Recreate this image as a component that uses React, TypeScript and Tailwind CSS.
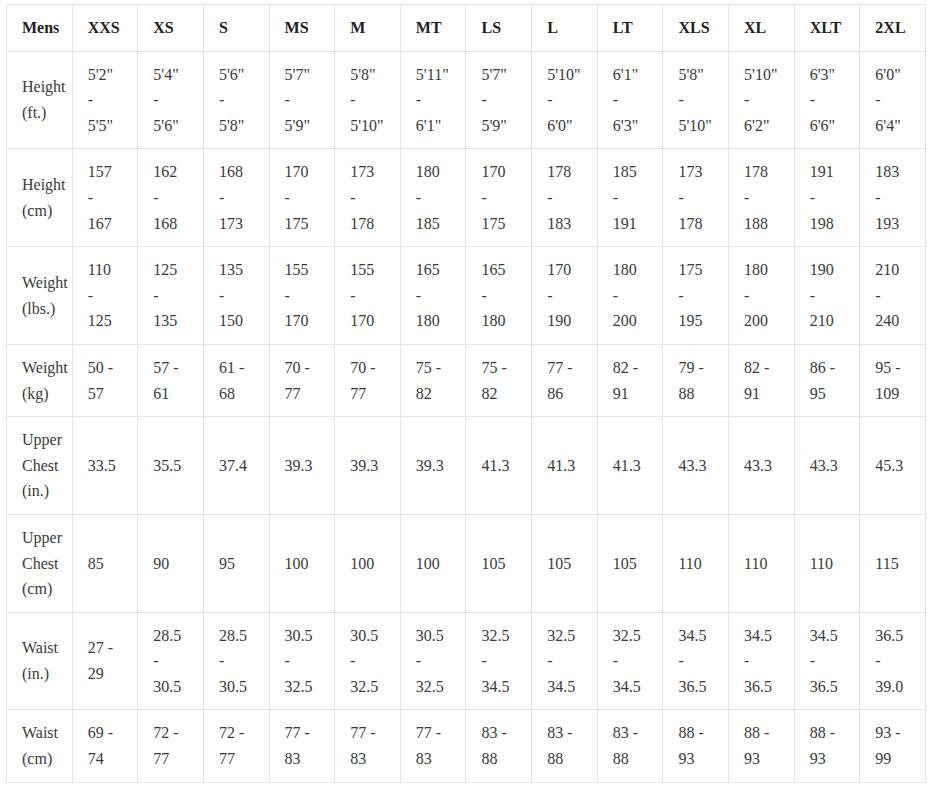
import React from 'react';

const sizes: string[] = ['XXS', 'XS', 'S', 'MS', 'M', 'MT', 'LS', 'L', 'LT', 'XLS', 'XL', 'XLT', '2XL'];

// tall = value on three lines ("a", "-", "b"), short = "a -" / "b"
const tall = (r: string): string => r.replace(' - ', '\n-\n');
const short = (r: string): string => r.replace(' - ', ' -\n');

type Row = { label: string; cells: string[] };

const rows: Row[] = [
  {
    label: 'Height\n(ft.)',
    cells: ['5\'2" - 5\'5"', '5\'4" - 5\'6"', '5\'6" - 5\'8"', '5\'7" - 5\'9"', '5\'8" - 5\'10"', '5\'11" - 6\'1"', '5\'7" - 5\'9"', '5\'10" - 6\'0"', '6\'1" - 6\'3"', '5\'8" - 5\'10"', '5\'10" - 6\'2"', '6\'3" - 6\'6"', '6\'0" - 6\'4"'].map(tall),
  },
  {
    label: 'Height\n(cm)',
    cells: ['157 - 167', '162 - 168', '168 - 173', '170 - 175', '173 - 178', '180 - 185', '170 - 175', '178 - 183', '185 - 191', '173 - 178', '178 - 188', '191 - 198', '183 - 193'].map(tall),
  },
  {
    label: 'Weight\n(lbs.)',
    cells: ['110 - 125', '125 - 135', '135 - 150', '155 - 170', '155 - 170', '165 - 180', '165 - 180', '170 - 190', '180 - 200', '175 - 195', '180 - 200', '190 - 210', '210 - 240'].map(tall),
  },
  {
    label: 'Weight\n(kg)',
    cells: ['50 - 57', '57 - 61', '61 - 68', '70 - 77', '70 - 77', '75 - 82', '75 - 82', '77 - 86', '82 - 91', '79 - 88', '82 - 91', '86 - 95', '95 - 109'].map(short),
  },
  {
    label: 'Upper\nChest\n(in.)',
    cells: ['33.5', '35.5', '37.4', '39.3', '39.3', '39.3', '41.3', '41.3', '41.3', '43.3', '43.3', '43.3', '45.3'],
  },
  {
    label: 'Upper\nChest\n(cm)',
    cells: ['85', '90', '95', '100', '100', '100', '105', '105', '105', '110', '110', '110', '115'],
  },
  {
    label: 'Waist\n(in.)',
    cells: [short('27 - 29'), ...['28.5 - 30.5', '28.5 - 30.5', '30.5 - 32.5', '30.5 - 32.5', '30.5 - 32.5', '32.5 - 34.5', '32.5 - 34.5', '32.5 - 34.5', '34.5 - 36.5', '34.5 - 36.5', '34.5 - 36.5', '36.5 - 39.0'].map(tall)],
  },
  {
    label: 'Waist\n(cm)',
    cells: ['69 - 74', '72 - 77', '72 - 77', '77 - 83', '77 - 83', '77 - 83', '83 - 88', '83 - 88', '83 - 88', '88 - 93', '88 - 93', '88 - 93', '93 - 99'].map(short),
  },
];

const cell =
  "border border-[#e7e5e0] pl-[15px] pr-[3px] py-[10px] align-middle whitespace-pre-line font-[family-name:'Liberation_Serif',serif]";

const App: React.FC = () => {
  return (
    <div className="bg-white min-h-[786px] pt-[4px] pl-[6px] pr-[7px] font-[family-name:'Liberation_Serif',serif] text-[16px] leading-[1.6] text-[#3a3a3a]">
      <table className="w-full table-fixed border-collapse border border-[#e7e5e0]">
        <thead>
          <tr>
            <th className={`${cell} text-left font-bold text-[#222]`}>Mens</th>
            {sizes.map((s) => (
              <th key={s} className={`${cell} text-left font-bold text-[#222]`}>
                {s}
              </th>
            ))}
          </tr>
        </thead>
        <tbody>
          {rows.map((row) => (
            <tr key={row.label}>
              <td className={cell}>{row.label}</td>
              {row.cells.map((c, i) => (
                <td key={i} className={cell}>
                  {c}
                </td>
              ))}
            </tr>
          ))}
        </tbody>
      </table>
    </div>
  );
};

export default App;
